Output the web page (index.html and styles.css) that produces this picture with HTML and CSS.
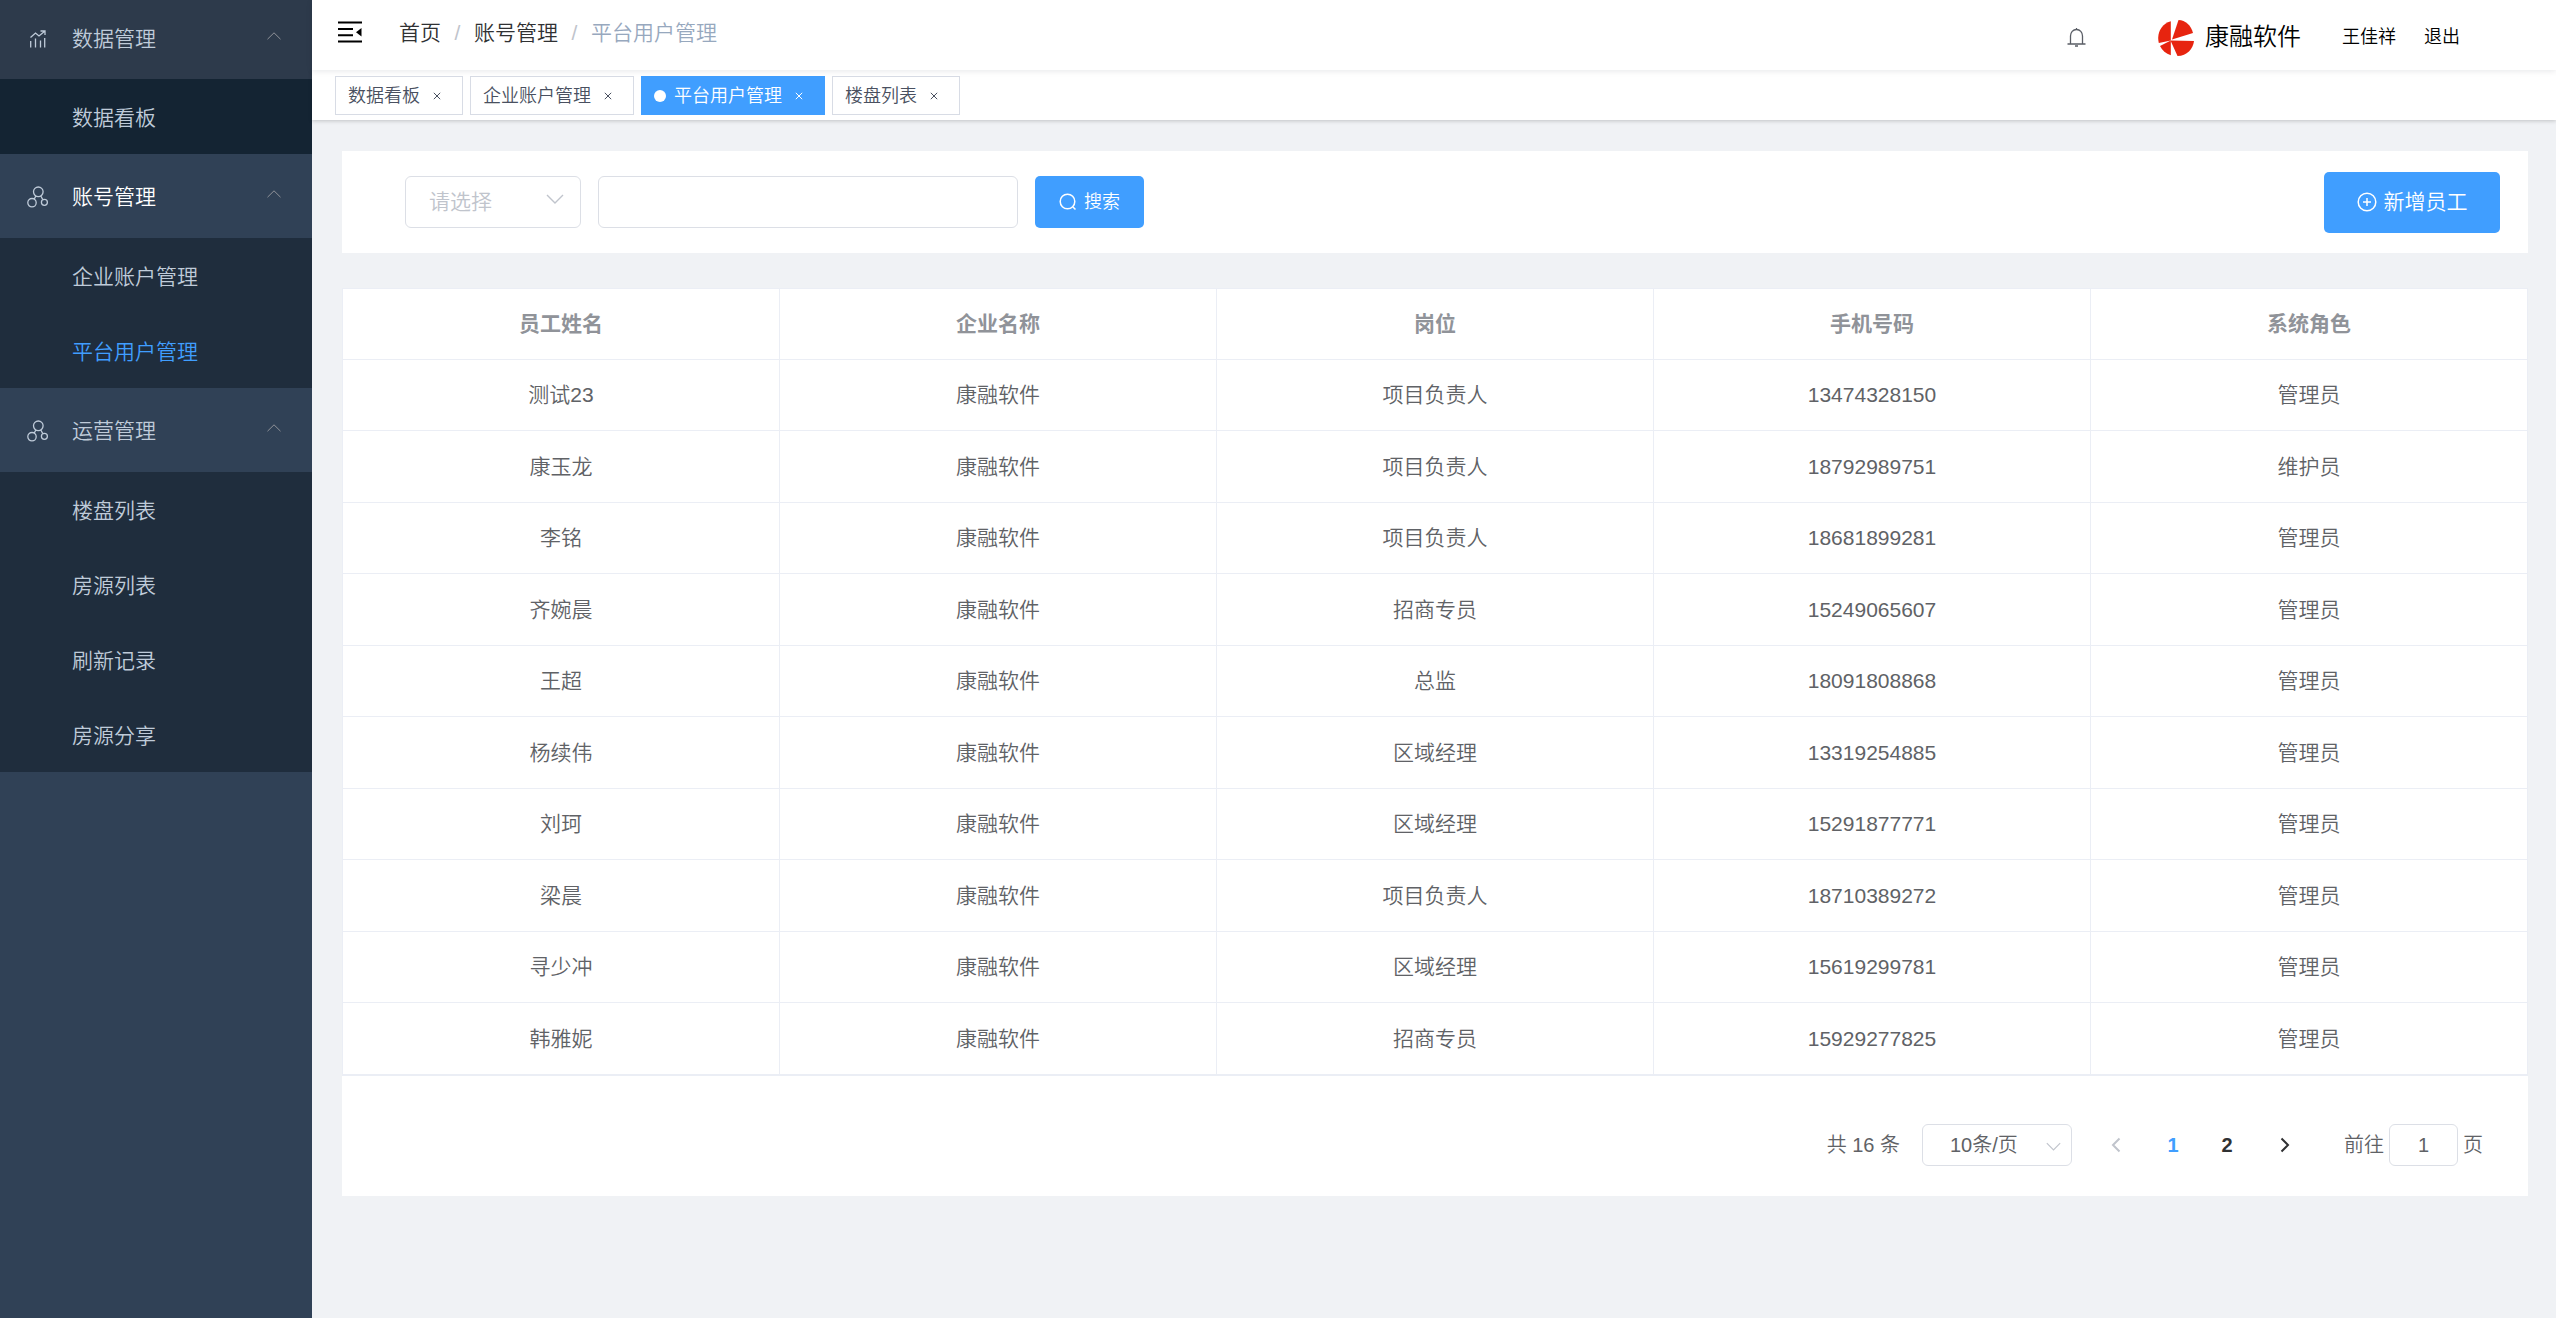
FILE: index.html
```html
<!DOCTYPE html>
<html lang="zh-CN">
<head>
<meta charset="utf-8">
<title>平台用户管理</title>
<link rel="stylesheet" href="styles.css">
</head>
<body>
<svg class="symbols" aria-hidden="true">
  <symbol id="up" viewBox="0 0 14 8"><path d="M.5 7.200 7 .8l6.500 6.400"/></symbol>
  <symbol id="down" viewBox="0 0 18 10"><path d="M1 1l8 8 8-8"/></symbol>
  <symbol id="cluster" viewBox="0 0 22 22"><circle cx="11.300" cy="5.800" r="4.800"/><circle cx="5" cy="16.700" r="4.200"/><circle cx="17.400" cy="16.300" r="3"/><path d="M8.800 10 7.300 13M13.800 10l2 3.600"/></symbol>
  <symbol id="close" viewBox="0 0 8 8"><path d="M.8.8l6.400 6.400M7.200.8.8 7.200"/></symbol>
</svg>
<div class="app">
  <nav class="sidebar" aria-label="主菜单">
    <section class="group">
      <button class="group-title group-title-first" aria-expanded="true">
        <svg class="menu-icon" viewBox="0 0 22 22"><path d="M3.700 19.500v-6.500M8.500 19.500v-9M13.500 19.500v-7M17.700 19.500V10M3.500 9.500 8.500 5l3.500 3 6-5M13.500 3h4.500V7"/></svg>
        <span>数据管理</span><svg class="fold"><use href="#up"/></svg>
      </button>
      <a class="item item-hover" href="#">数据看板</a>
    </section>
    <section class="group">
      <button class="group-title group-title-active" aria-expanded="true">
        <svg class="menu-icon"><use href="#cluster"/></svg>
        <span>账号管理</span><svg class="fold"><use href="#up"/></svg>
      </button>
      <a class="item" href="#">企业账户管理</a>
      <a class="item item-active" href="#">平台用户管理</a>
    </section>
    <section class="group">
      <button class="group-title" aria-expanded="true">
        <svg class="menu-icon"><use href="#cluster"/></svg>
        <span>运营管理</span><svg class="fold"><use href="#up"/></svg>
      </button>
      <a class="item" href="#">楼盘列表</a>
      <a class="item" href="#">房源列表</a>
      <a class="item" href="#">刷新记录</a>
      <a class="item" href="#">房源分享</a>
    </section>
  </nav>
  <div class="main">
    <header class="navbar">
      <button class="hamburger" aria-label="收起菜单"><svg viewBox="0 0 24 22"><path d="M0 1.500h24M0 8h15M0 14.200h15M0 20.500h24" stroke="#000" stroke-width="2"/><path d="M23.500 7v8.500l-5.500-4.200z" fill="#000"/></svg></button>
      <nav class="breadcrumb" aria-label="面包屑">
        <a href="#">首页</a><span class="slash">/</span><a href="#">账号管理</a><span class="slash">/</span><span class="current">平台用户管理</span>
      </nav>
      <div class="user">
        <button class="bell" aria-label="通知"><svg viewBox="0 0 19 20"><path d="M.5 17h18M3.500 17V9c0-3.500 2.500-6.500 6-6.500s6 3 6 6.500v8M9.500 1v1.500M8 19h3" fill="none" stroke="#5a5e66" stroke-width="1.300"/></svg></button>
        <svg class="logo" viewBox="0 0 36 36"><g fill="#e7240f"><path d="M12.800 1.200V20.500L.8 23C-1.500 13.500 3 4 12.800 1.200z"/><path d="M20.500 0c7 .5 12.500 5 14.500 13L14 19.500z"/><path d="M36 21c-1 8-7 15-16.500 15L12.500 20.500z"/><path d="M12.800 35.200C8 33.500 4 30.500 2 26L12.800 20.500z"/></g></svg>
        <span class="brand">康融软件</span>
        <a class="name" href="#">王佳祥</a>
        <a href="#">退出</a>
      </div>
    </header>
    <div class="tabs">
      <div class="tab"><a href="#">数据看板</a><button aria-label="关闭"><svg><use href="#close"/></svg></button></div>
      <div class="tab"><a href="#">企业账户管理</a><button aria-label="关闭"><svg><use href="#close"/></svg></button></div>
      <div class="tab tab-active"><i class="dot"></i><a href="#">平台用户管理</a><button aria-label="关闭"><svg><use href="#close"/></svg></button></div>
      <div class="tab"><a href="#">楼盘列表</a><button aria-label="关闭"><svg><use href="#close"/></svg></button></div>
    </div>
    <main class="content">
      <form class="filters">
        <div class="select filter-select"><select aria-label="筛选条件"><option>请选择</option></select><svg><use href="#down"/></svg></div>
        <input class="keyword" type="text" aria-label="关键字">
        <button class="primary search" type="button"><svg viewBox="0 0 18 18"><circle cx="8.500" cy="8.500" r="7.300"/><path d="M14 14l2.500 2.500"/></svg>搜索</button>
        <button class="primary add" type="button"><svg viewBox="0 0 20 20"><circle cx="10" cy="10" r="8.800"/><path d="M10 6v8M6 10h8"/></svg>新增员工</button>
      </form>
      <section class="panel">
        <table>
          <thead><tr><th>员工姓名</th><th>企业名称</th><th>岗位</th><th>手机号码</th><th>系统角色</th></tr></thead>
          <tbody>
            <tr><td>测试23</td><td>康融软件</td><td>项目负责人</td><td>13474328150</td><td>管理员</td></tr>
            <tr><td>康玉龙</td><td>康融软件</td><td>项目负责人</td><td>18792989751</td><td>维护员</td></tr>
            <tr><td>李铭</td><td>康融软件</td><td>项目负责人</td><td>18681899281</td><td>管理员</td></tr>
            <tr><td>齐婉晨</td><td>康融软件</td><td>招商专员</td><td>15249065607</td><td>管理员</td></tr>
            <tr><td>王超</td><td>康融软件</td><td>总监</td><td>18091808868</td><td>管理员</td></tr>
            <tr><td>杨续伟</td><td>康融软件</td><td>区域经理</td><td>13319254885</td><td>管理员</td></tr>
            <tr><td>刘珂</td><td>康融软件</td><td>区域经理</td><td>15291877771</td><td>管理员</td></tr>
            <tr><td>梁晨</td><td>康融软件</td><td>项目负责人</td><td>18710389272</td><td>管理员</td></tr>
            <tr><td>寻少冲</td><td>康融软件</td><td>区域经理</td><td>15619299781</td><td>管理员</td></tr>
            <tr><td>韩雅妮</td><td>康融软件</td><td>招商专员</td><td>15929277825</td><td>管理员</td></tr>
          </tbody>
        </table>
        <div class="pagination">
          <span class="total">共 16 条</span>
          <div class="select page-size"><select aria-label="每页条数"><option>10条/页</option></select><svg><use href="#down"/></svg></div>
          <button class="page" disabled aria-label="上一页"><svg viewBox="0 0 10 16"><path d="M8.500 1.500 2 8l6.500 6.500"/></svg></button>
          <button class="page page-active">1</button>
          <button class="page">2</button>
          <button class="page page-next" aria-label="下一页"><svg viewBox="0 0 10 16"><path d="M1.500 1.500 8 8l-6.500 6.500"/></svg></button>
          <label class="jump">前往<input type="text" value="1">页</label>
        </div>
      </section>
    </main>
  </div>
</div>
</body>
</html>
```
FILE: styles.css
```css
* { box-sizing: border-box; }
body {
  margin: 0;
  font: 21px/30px "Liberation Sans", "Noto Sans CJK SC", sans-serif;
  font-weight: 350;
  color: #606266;
  background: #f0f2f5;
}
a { color: inherit; text-decoration: none; }
button, input, select { font: inherit; color: inherit; margin: 0; }
button { padding: 0; border: 0; background: none; }
svg { display: block; fill: none; stroke: currentColor; flex: none; }
.symbols { position: absolute; width: 0; height: 0; }
.app { display: flex; min-height: 100vh; }

/* Sidebar */
.sidebar { width: 312px; flex: none; background: #304156; color: #bfcbd9; }
.group-title {
  display: flex; align-items: center; width: 100%; height: 84px;
  padding: 2px 31px 0 27px; text-align: left;
}
.group-title span { flex: 1; }
.group-title-first { height: 79px; padding-top: 0; padding-bottom: 2px; background: #2d3a4b; }
.group-title-active span { color: #fff; }
.menu-icon { width: 22px; height: 22px; margin-right: 23px; stroke-width: 1.3; }
.fold { width: 14px; height: 8px; margin-bottom: 6px; color: #909399; }
.item {
  display: flex; align-items: center; height: 75px;
  padding: 3px 0 0 72px; background: #1f2d3d;
}
.item-hover { background: #142433; }
.item-active { color: #409eff; }

.main { flex: 1; min-width: 0; }

/* Top bar */
.navbar {
  position: relative; display: flex; height: 70px; padding: 0 96px 0 26px;
  background: #fff; color: #000; box-shadow: 0 1px 6px rgba(0, 21, 41, .1);
}
.hamburger { width: 24px; height: 64px; margin-right: 37px; }
.hamburger svg { width: 24px; height: 22px; stroke: none; }
.breadcrumb { display: flex; align-items: center; height: 66px; color: #303133; }
.slash { width: 33px; text-align: center; color: #c0c4cc; }
.current { color: #97a8be; }
.user { display: flex; align-items: center; height: 74px; margin-left: auto; font-size: 18px; }
.bell svg { width: 19px; height: 20px; }
.logo { width: 36px; height: 36px; margin: 2px 11px 0 72px; stroke: none; }
.brand { font-size: 24px; }
.name { margin: 0 28px 0 41px; }

/* Open pages */
.tabs {
  display: flex; gap: 7px; height: 50px; padding: 6px 23px 0; background: #fff;
  box-shadow: 0 1px 4px rgba(0, 0, 0, .2); font-size: 18px; color: #495060;
}
.tab {
  display: flex; align-items: center; height: 39px; padding: 0 21px 0 12px;
  border: 1px solid #d8dce5;
}
.tab button { margin-left: 13px; }
.tab button svg { width: 8px; height: 8px; }
.tab-active { background: #409eff; border-color: #409eff; color: #fff; }
.dot { width: 12px; height: 12px; margin-right: 8px; border-radius: 50%; background: #fff; }

.content { padding: 31px 28px 0 30px; }

/* Filter bar */
.filters { display: flex; align-items: center; height: 102px; padding: 0 28px 0 63px; background: #fff; }
.select { position: relative; }
select, input {
  width: 100%; height: 100%; padding: 0; border: 1px solid #dcdfe6; border-radius: 6px;
  background: #fff; appearance: none;
}
.select svg { position: absolute; pointer-events: none; color: #c0c4cc; stroke-width: 1.4; }
.filter-select { width: 176px; height: 52px; color: #c0c4cc; }
.filter-select select { padding-left: 23px; }
.filter-select svg { width: 18px; height: 10px; right: 17px; top: 18px; }
.filters .keyword { width: 420px; height: 52px; margin: 0 17px; padding: 0 22px; }
.primary {
  display: flex; align-items: center; justify-content: center; gap: 7px;
  border-radius: 5px; background: #409eff; color: #fff; stroke-width: 1.5;
}
.search { width: 109px; height: 52px; font-size: 18px; }
.search svg { width: 18px; height: 18px; }
.add { width: 176px; height: 61px; margin-left: auto; }
.add svg { width: 20px; height: 20px; }

/* Staff table */
.panel { margin-top: 35px; background: #fff; }
table {
  width: 100%; table-layout: fixed; border-collapse: separate; border-spacing: 0;
  border: 1px solid #ebeef5; border-right: 0;
}
th, td {
  height: 71px; padding: 0; text-align: center;
  border-right: 1px solid #ebeef5; border-bottom: 1px solid #ebeef5;
}
th { font-weight: 700; color: #909399; }
th:first-child { width: calc(20% + 2px); }
tbody tr:nth-child(even) td { height: 72px; }

/* Pagination */
.pagination {
  display: flex; align-items: center; justify-content: flex-end;
  height: 120px; padding: 18px 45px 0 0; font-size: 20px;
}
.page-size { width: 150px; height: 42px; margin: 0 17px 0 22px; }
.page-size select { padding-left: 27px; }
.page-size svg { width: 15px; height: 9px; right: 11px; top: 18px; }
.page { width: 54px; height: 42px; font-weight: 700; color: #303133; }
.page svg { width: 10px; height: 16px; margin: auto; stroke-width: 2; }
.page:disabled { color: #c0c4cc; margin-right: 3px; }
.page-active { color: #409eff; }
.page-next { margin-left: 4px; }
.jump { display: flex; align-items: center; gap: 5px; margin-left: 32px; }
.jump input { width: 69px; height: 42px; text-align: center; }
```
